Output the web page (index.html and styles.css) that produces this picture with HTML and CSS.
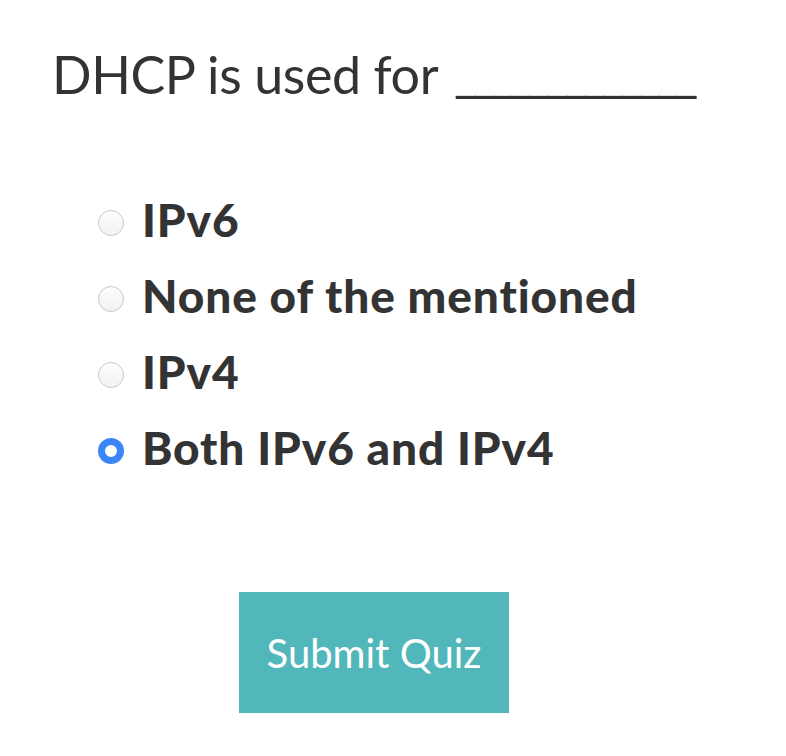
FILE: index.html
```html
<!DOCTYPE html>
<html>
<head>
<meta charset="utf-8">
<link rel="stylesheet" href="styles.css">
</head>
<body>
<div class="quiz">
  <h1 class="question">DHCP is used for <span class="blank">_____________</span></h1>
  <ul class="options">
    <li class="option"><span class="radio"></span><span class="label">IPv6</span></li>
    <li class="option"><span class="radio"></span><span class="label">None of the mentioned</span></li>
    <li class="option"><span class="radio"></span><span class="label">IPv4</span></li>
    <li class="option"><span class="radio checked"></span><span class="label">Both IPv6 and IPv4</span></li>
  </ul>
  <div class="actions"><button class="submit">Submit Quiz</button></div>
</div>
</body>
</html>
```
FILE: styles.css
```css
html, body { margin: 0; padding: 0; background: #fff; }
body { font-family: "Lato", "Liberation Sans", sans-serif; color: #333; }
.quiz { padding: 39px 0 0 52px; }
.question {
  margin: 0;
  font-size: 52px;
  font-weight: 400;
  line-height: 70px;
  color: #333;
  letter-spacing: -0.4px;
}
.blank { letter-spacing: -5.5px; position: relative; top: -2px; margin-left: 4px; }
.options { list-style: none; margin: 72px 0 0 0; padding: 0 0 0 46px; }
.option { display: flex; align-items: center; height: 76px; }
.radio {
  width: 26px; height: 26px; box-sizing: border-box;
  border-radius: 50%;
  border: 1px solid #c8c8c8;
  background: linear-gradient(#fdfdfd, #f2f2f2);
  margin-right: 18px;
  flex: none;
  margin-top: 8px;
}
.radio.checked {
  border: 7px solid #3a86f7;
  background: #fff;
}
.label { font-size: 46px; font-weight: 900; letter-spacing: 0.9px; color: #333; }
.actions { padding: 107px 0 0 187px; }
.submit {
  display: block;
  width: 270px; height: 121px;
  background: #52b7ba; border: 0; color: #fff;
  font-family: "Lato", "Liberation Sans", sans-serif;
  font-size: 40px; font-weight: 400;
  padding: 0;
}
```
